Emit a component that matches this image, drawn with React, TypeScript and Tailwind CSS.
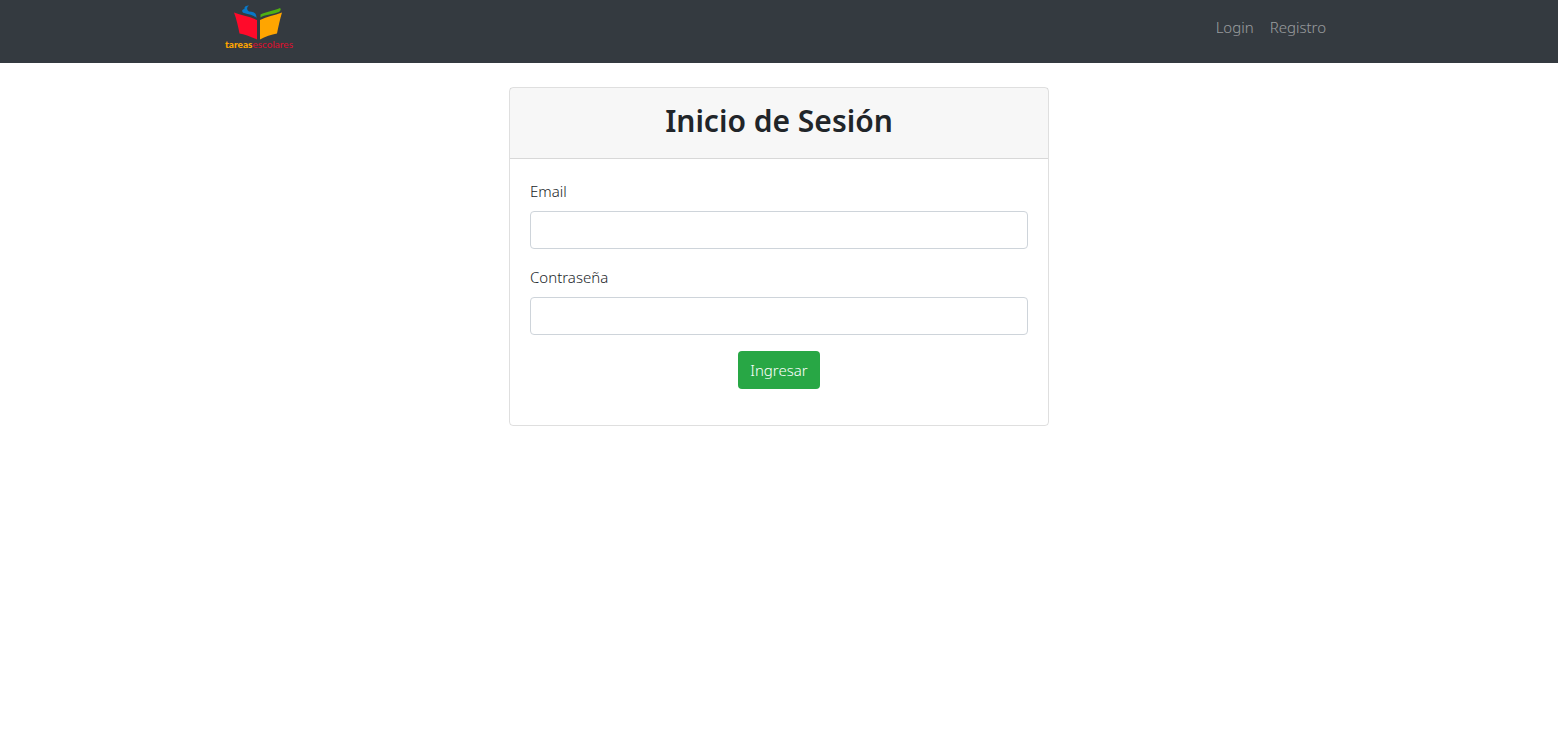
function Logo() {
  return (
    <svg viewBox="0 0 70 46" role="img" aria-label="tareas escolares" className="h-[46px] w-[70px]">
      <path d="M10 8.500 C17 11.500 25 12 33 16 L33 35.500 C27 32.500 20 30.500 15.500 29.500 C14 22 12.500 15 10 8.500Z" fill="#ff0a2a" />
      <path d="M36 16 C43 12.500 50 11.500 58 8.500 C56 15 54.500 22 53 29.500 C47.500 30.500 41 32.500 36 35.500Z" fill="#ffa500" />
      <path d="M36.500 10.500 C42 7.500 50 7 56 4 C57.500 5 56.500 7 55 8 C49 10.500 42 10 36.500 13.500Z" fill="#4fb012" />
      <path d="M25 1.500 C21.500 1.500 20 3 20.500 5 C17.500 5.500 17.500 8 20 9 C25 10.500 30 11 32.500 14 C32.500 9 29.500 7.500 25 7.500 C22.500 6 22.500 3 25 1.500Z" fill="#0878c8" />
      <text x="1" y="44" fontFamily="Lato, sans-serif" fontSize="10">
        <tspan fill="#ffa500" fontWeight="900">tareas</tspan>
        <tspan fill="#d8102e" fontWeight="500">escolares</tspan>
      </text>
    </svg>
  );
}

interface FieldProps {
  id: string;
  label: string;
  type: string;
}

function Field({ id, label, type }: FieldProps) {
  return (
    <div className="mb-4">
      <label htmlFor={id} className="mb-2 block">
        {label}
      </label>
      <input
        id={id}
        name={id}
        type={type}
        className="block h-[38px] w-full rounded border border-[#ced4da] bg-white px-3 outline-none focus:border-[#80bdff]"
      />
    </div>
  );
}

export default function App() {
  return (
    <div className="min-h-screen bg-white font-['Noto_Sans','Open_Sans',sans-serif] text-[15px] leading-6 font-light text-[#212529]">
      <header className="bg-[#343a40]">
        <nav className="mx-auto flex h-[63px] max-w-[1140px] items-start justify-between px-[15px]">
          <a href="#" className="pt-1">
            <Logo />
          </a>
          <div className="flex pt-[7px] text-white/50">
            <a href="#login" className="p-2">
              Login
            </a>
            <a href="#registro" className="p-2">
              Registro
            </a>
          </div>
        </nav>
      </header>
      <main className="mx-auto mt-6 max-w-[570px] px-[15px]">
        <section className="rounded border border-black/[.125]">
          <div className="border-b border-black/[.125] bg-black/[.03] px-5 pt-[14px] pb-[18px]">
            <h2 className="text-center text-[30px] leading-[38px] font-semibold">Inicio de Sesión</h2>
          </div>
          <form className="p-5" onSubmit={(e) => e.preventDefault()}>
            <Field id="email" label="Email" type="email" />
            <Field id="password" label="Contraseña" type="password" />
            <div className="mb-4 flex justify-center">
              <button type="submit" className="h-[38px] rounded bg-[#28a745] px-3 text-white">
                Ingresar
              </button>
            </div>
          </form>
        </section>
      </main>
    </div>
  );
}
